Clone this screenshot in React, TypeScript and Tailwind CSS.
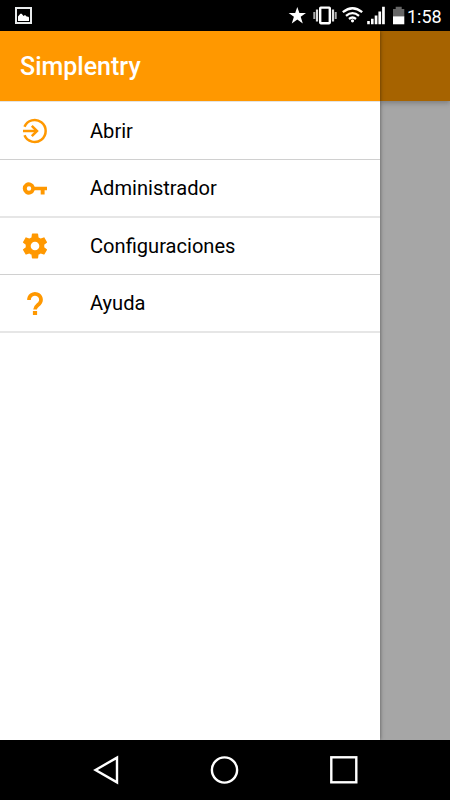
import type { ReactNode } from 'react';

function StatusBar() {
  return (
    <div className="flex h-[31px] shrink-0 items-center justify-between bg-black text-white">
      <svg width="20" height="31" viewBox="0 0 20 31" className="ml-[14px]">
        <rect x="2" y="8" width="15" height="15" fill="none" stroke="#e8ebec" strokeWidth="2" />
        <path d="M4 21v-4.5l2.3-2.8h1.4l1.8 2.2 1.5-.9 2 1.8 1-.4 1 1v3.6z" fill="#fff" />
      </svg>
      <div className="flex items-center">
        <svg width="123" height="31" viewBox="284 0 123 31" fill="#fff">
          <path d="M297.3 7l2.1 6h6.6l-5.3 3.8 2.1 6.8-5.5-4.2-5.5 4.2 2.1-6.8-5.3-3.8h6.6z" />
          <rect x="320.2" y="7.6" width="9.6" height="15.6" rx=".6" fill="none" stroke="#fff" strokeWidth="2.4" />
          <path d="M317 9.5v12M333 9.5v12" stroke="#ddd" strokeWidth="2.2" />
          <path d="M314.3 12v7M335.7 12v7" stroke="#aaa" strokeWidth="2" />
          <g fill="none" stroke="#fff" strokeWidth="2.3">
            <path d="M342.8 12.2q9.7-8 19.4 0" />
            <path d="M346 15.8q6.5-5.4 13 0" />
            <path d="M349 19q3.5-2.9 7 0" />
          </g>
          <circle cx="352.5" cy="20.8" r="1.6" />
          <path d="M367.2 21h2.6v3.3h-2.6zM371 18.8h2.6v5.5h-2.6zM374.7 15.5h2.7v8.8h-2.7zM378.4 11.5h2.7v12.8h-2.7zM382.1 6.7h2.7v17.6h-2.7z" />
          <path d="M393 9h2.7V6.7h6V9h2.6v7.5H393z" fill="#666" />
          <path d="M393 16.3h11.3v8H393z" />
        </svg>
        <span className="w-[43px] pt-[3px] text-[18px] leading-[28px]">1:58</span>
      </div>
    </div>
  );
}

function EnterIcon() {
  return (
    <svg width="30" height="30" viewBox="20 116 30 30" fill="none" stroke="#ff9800" strokeWidth="2.5">
      <path d="M24.5 126.8A11 11 0 1 1 24.5 135.2" />
      <path d="M23 131h14" />
      <path d="M31.8 125.8l5.2 5.2-5.2 5.2" />
    </svg>
  );
}

function KeyIcon() {
  return (
    <svg width="30" height="30" viewBox="20 173.3 30 30" fill="#ff9800">
      <path
        fillRule="evenodd"
        d="M34.7 187A6.1 6.1 0 1 0 34.7 190.6H40.7V194.7H44.6V190.6H47V187ZM29 186.6A2.2 2.2 0 1 1 29 191A2.2 2.2 0 1 1 29 186.6Z"
      />
    </svg>
  );
}

function GearIcon() {
  return (
    <svg width="30" height="30" viewBox="-.1 -.1 24.2 24.2" fill="#ff9800">
      <path d="M19.43 12.98c.04-.32.07-.64.07-.98s-.03-.66-.07-.98l2.11-1.65c.19-.15.24-.42.12-.64l-2-3.46c-.12-.22-.39-.3-.61-.22l-2.49 1c-.52-.4-1.08-.73-1.69-.98l-.38-2.65C14.46 2.18 14.25 2 14 2h-4c-.25 0-.46.18-.49.42l-.38 2.65c-.61.25-1.17.59-1.69.98l-2.49-1c-.23-.09-.49 0-.61.22l-2 3.46c-.13.22-.07.49.12.64l2.11 1.65c-.04.32-.07.65-.07.98s.03.66.07.98l-2.11 1.65c-.19.15-.24.42-.12.64l2 3.46c.12.22.39.3.61.22l2.49-1c.52.4 1.08.73 1.69.98l.38 2.65c.03.24.24.42.49.42h4c.25 0 .46-.18.49-.42l.38-2.65c.61-.25 1.17-.59 1.69-.98l2.49 1c.23.09.49 0 .61-.22l2-3.46c.12-.22.07-.49-.12-.64l-2.11-1.65zM12 15.5c-1.93 0-3.5-1.57-3.5-3.5s1.57-3.5 3.5-3.5 3.5 1.57 3.5 3.5-1.57 3.5-3.5 3.5z" />
    </svg>
  );
}

function HelpIcon() {
  return (
    <svg width="30" height="30" viewBox="20 288 30 30" fill="none" stroke="#ff9800" strokeWidth="3.7">
      <path d="M29 300A6 5.8 0 1 1 39.4 303.6C37.4 305.6 35 306.6 35 309.6" />
      <path d="M35 311v4" strokeWidth="4.2" />
    </svg>
  );
}

function MenuItem({ icon, label, className }: { icon: ReactNode; label: string; className: string }) {
  return (
    <li className={`flex items-center pl-5 ${className}`}>
      {icon}
      <span className="ml-10 text-[20.1px] leading-6 text-black">{label}</span>
    </li>
  );
}

function Drawer() {
  return (
    <aside className="z-10 flex w-[380px] shrink-0 flex-col bg-white shadow-[0_0_4px_rgba(0,0,0,0.5)]">
      <header className="flex h-[70px] items-center bg-[#ff9800] pt-0.5 pl-5">
        <h1 className="text-[25px] font-medium text-white">Simplentry</h1>
      </header>
      <ul>
        <MenuItem icon={<EnterIcon />} label="Abrir" className="h-[58px] border-t border-[#e3e3e3] pt-px" />
        <li className="h-px bg-[#d0d0d0]" />
        <MenuItem icon={<KeyIcon />} label="Administrador" className="h-14" />
        <li className="h-0.5 bg-[#e6e6e6]" />
        <MenuItem icon={<GearIcon />} label="Configuraciones" className="h-14" />
        <li className="h-px bg-[#d0d0d0]" />
        <MenuItem icon={<HelpIcon />} label="Ayuda" className="h-14" />
        <li className="h-0.5 bg-[#e6e6e6]" />
      </ul>
    </aside>
  );
}

function NavBar() {
  return (
    <nav className="h-[60px] shrink-0 bg-black">
      <svg width="450" height="60" viewBox="0 740 450 60" fill="none" stroke="#fff" strokeWidth="2.4">
        <path d="M95.5 770L117 757.6V782.4Z" />
        <circle cx="224.5" cy="770" r="12.6" />
        <rect x="331.3" y="757.3" width="25" height="25" />
      </svg>
    </nav>
  );
}

export default function App() {
  return (
    <div className="flex h-[800px] w-[450px] flex-col overflow-hidden bg-black font-['Roboto',sans-serif]">
      <StatusBar />
      <main className="flex min-h-0 flex-1 overflow-hidden">
        <Drawer />
        {/* dimmed page behind the drawer */}
        <div className="flex-1 bg-[#a6a6a6]">
          <div className="h-[70px] bg-[#a66300] shadow-[0_2px_5px_rgba(0,0,0,0.25)]" />
        </div>
      </main>
      <NavBar />
    </div>
  );
}
